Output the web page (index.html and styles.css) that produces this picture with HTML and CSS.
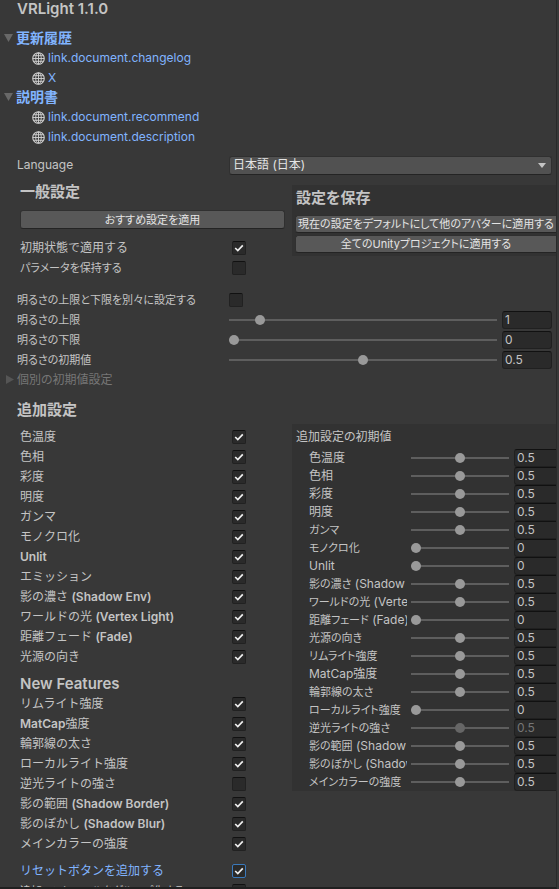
FILE: index.html
```
<!DOCTYPE html>
<html lang="ja">

<head>
  <meta charset="UTF-8" />
  <meta name="viewport" content="width=device-width, initial-scale=1.0" />
  <title>VRLight 1.1.0</title>
  <link rel="stylesheet" href="styles.css">
</head>

<body>
  <svg class="sprite" aria-hidden="true">
    <symbol id="globe" viewBox="0 0 14 14">
      <g fill="none" stroke="currentColor">
        <circle cx="7" cy="7" r="6.2" stroke-width="1.2" />
        <ellipse cx="7" cy="7" rx="3" ry="6" />
        <path d="M7 1v12M1 7h12M2 4h10M2 10h10" />
      </g>
    </symbol>
  </svg>

  <main class="inspector">
    <h1>VRLight 1.1.0</h1>

    <details class="links" open>
      <summary>更新履歴</summary>
      <a href="#changelog"><svg class="globe"><use href="#globe" /></svg>link.document.changelog</a>
      <a href="#x"><svg class="globe"><use href="#globe" /></svg>X</a>
    </details>
    <details class="links" open>
      <summary>説明書</summary>
      <a href="#recommend"><svg class="globe"><use href="#globe" /></svg>link.document.recommend</a>
      <a href="#description"><svg class="globe"><use href="#globe" /></svg>link.document.description</a>
    </details>

    <div class="field language">
      <label for="language">Language</label>
      <select id="language">
        <option>日本語 (日本)</option>
      </select>
    </div>

    <div class="columns general">
      <section class="column">
        <h2>一般設定</h2>
        <button class="apply">おすすめ設定を適用</button>
        <div class="toggles">
          <label class="toggle wide">初期状態で適用する<input type="checkbox" checked></label>
          <label class="toggle kana">パラメータを保持する<input type="checkbox"></label>
        </div>
      </section>
      <section class="panel save">
        <h2>設定を保存</h2>
        <button>現在の設定をデフォルトにして他のアバターに適用する</button>
        <button>全てのUnityプロジェクトに適用する</button>
      </section>
    </div>

    <section class="brightness">
      <div class="field">
        <label class="kana" for="separate">明るさの上限と下限を別々に設定する</label>
        <input type="checkbox" id="separate">
      </div>
      <div class="field">
        <label class="kana" for="upper">明るさの上限</label>
        <input type="range" id="upper" min="0" max="10" step="any" value="1">
        <input type="text" aria-label="明るさの上限" value="1">
      </div>
      <div class="field">
        <label class="kana" for="lower">明るさの下限</label>
        <input type="range" id="lower" min="0" max="1" step="any" value="0">
        <input type="text" aria-label="明るさの下限" value="0">
      </div>
      <div class="field">
        <label class="kana" for="initial">明るさの初期値</label>
        <input type="range" id="initial" min="0" max="1" step="any" value="0.5">
        <input type="text" aria-label="明るさの初期値" value="0.5">
      </div>
      <details class="individual">
        <summary>個別の初期値設定</summary>
      </details>
    </section>

    <h2 class="extra-title">追加設定</h2>
    <div class="columns">
      <section class="column">
        <div class="toggles wide">
          <label class="toggle">色温度<input type="checkbox" checked></label>
          <label class="toggle">色相<input type="checkbox" checked></label>
          <label class="toggle">彩度<input type="checkbox" checked></label>
          <label class="toggle">明度<input type="checkbox" checked></label>
          <label class="toggle">ガンマ<input type="checkbox" checked></label>
          <label class="toggle">モノクロ化<input type="checkbox" checked></label>
          <label class="toggle"><b>Unlit</b><input type="checkbox" checked></label>
          <label class="toggle">エミッション<input type="checkbox" checked></label>
          <label class="toggle"><span>影の濃さ <b>(Shadow Env)</b></span><input type="checkbox" checked></label>
          <label class="toggle"><span>ワールドの光 <b>(Vertex Light)</b></span><input type="checkbox" checked></label>
          <label class="toggle"><span>距離フェード <b>(Fade)</b></span><input type="checkbox" checked></label>
          <label class="toggle">光源の向き<input type="checkbox" checked></label>
        </div>
        <h2 class="new-title">New Features</h2>
        <div class="toggles wide">
          <label class="toggle">リムライト強度<input type="checkbox" checked></label>
          <label class="toggle"><span><b>MatCap</b>強度</span><input type="checkbox" checked></label>
          <label class="toggle">輪郭線の太さ<input type="checkbox" checked></label>
          <label class="toggle">ローカルライト強度<input type="checkbox" checked></label>
          <label class="toggle">逆光ライトの強さ<input type="checkbox"></label>
          <label class="toggle"><span>影の範囲 <b>(Shadow Border)</b></span><input type="checkbox" checked></label>
          <label class="toggle"><span>影のぼかし <b>(Shadow Blur)</b></span><input type="checkbox" checked></label>
          <label class="toggle">メインカラーの強度<input type="checkbox" checked></label>
        </div>
        <div class="toggles options">
          <label class="toggle wide selected">リセットボタンを追加する<input type="checkbox" checked></label>
          <label class="toggle kana">追加コントロールをグループ化する<input type="checkbox" checked></label>
        </div>
      </section>

      <section class="panel defaults">
        <h3>追加設定の初期値</h3>
        <div id="defaultList"></div>
      </section>
    </div>
  </main>

  <script>
    const defaultList = document.getElementById("defaultList");

    const defaults = [
      { label: "色温度", value: 0.5 },
      { label: "色相", value: 0.5 },
      { label: "彩度", value: 0.5 },
      { label: "明度", value: 0.5 },
      { label: "ガンマ", value: 0.5 },
      { label: "モノクロ化", value: 0 },
      { label: "Unlit", value: 0 },
      { label: "影の濃さ", suffix: " (Shadow Env)", value: 0.5 },
      { label: "ワールドの光", suffix: " (Vertex Light)", value: 0.5 },
      { label: "距離フェード", suffix: " (Fade)", value: 0 },
      { label: "光源の向き", value: 0.5 },
      { label: "リムライト強度", value: 0.5 },
      { label: "MatCap強度", value: 0.5 },
      { label: "輪郭線の太さ", value: 0.5 },
      { label: "ローカルライト強度", value: 0 },
      { label: "逆光ライトの強さ", value: 0.5, disabled: true },
      { label: "影の範囲", suffix: " (Shadow Border)", value: 0.5 },
      { label: "影のぼかし", suffix: " (Shadow Blur)", value: 0.5 },
      { label: "メインカラーの強度", value: 0.5 }
    ];

    const hasKana = (text) => /[ぁ-ヿ]/.test(text);

    defaults.forEach((item, i) => {
      const row = document.createElement("div");
      row.className = "default-row";
      row.innerHTML = `
        <label for="default${i}"><span class="${hasKana(item.label) ? "kana" : ""}">${item.label}</span>${item.suffix || ""}</label>
        <input type="range" id="default${i}" min="0" max="1" step="any" value="${item.value}">
        <input type="text" aria-label="${item.label}" value="${item.value}">`;
      const [range, text] = row.querySelectorAll("input");
      range.disabled = text.disabled = Boolean(item.disabled);
      range.addEventListener("input", () => {
        text.value = Number(range.value).toFixed(2);
      });
      defaultList.appendChild(row);
    });
  </script>
</body>

</html>
```
FILE: styles.css
```
:root {
  --background: #383838;
  --panel: #323232;
  --field: #2a2a2a;
  --field-border: #202020;
  --button: #585858;
  --text: #c4c4c4;
  --text-disabled: #767676;
  --link: #81b4ff;
  --label-width: 212px;
}

* {
  box-sizing: border-box;
}

body {
  margin: 0;
  height: 100vh;
  overflow: hidden;
  background: var(--background);
  color: var(--text);
  font-family: Inter, "Noto Sans CJK JP", sans-serif;
  font-size: 12px;
  line-height: 20px;
  font-feature-settings: "palt";
}

.sprite {
  display: none;
}

.inspector {
  height: 100vh;
  margin-right: 2px;
  overflow: hidden;
  border-right: 1px solid #2a2a2a;
  border-bottom: 2px solid #202020;
}

h1,
h2,
h3 {
  margin: 0;
  white-space: nowrap;
}

h1 {
  padding-left: 17px;
  font-size: 15px;
  font-weight: 600;
  line-height: 18px;
}

h2 {
  font-size: 15px;
  font-weight: 600;
  font-feature-settings: normal;
}

h3 {
  font-size: 12px;
  font-weight: 400;
}

b {
  font-weight: 600;
}

.kana {
  font-size: 11px;
}

.wide {
  font-feature-settings: normal;
}

/* Foldouts */
summary {
  display: flex;
  align-items: center;
  height: 20px;
  list-style: none;
  cursor: pointer;
}

summary::before {
  content: "";
  width: 9px;
  height: 8px;
  margin: 0 3px 0 4px;
  background: #686868;
  clip-path: polygon(0 0, 100% 0, 50% 100%);
}

.links {
  margin-top: -1px;
}

h1 + .links {
  margin-top: 10px;
}

.links summary {
  color: var(--link);
  font-size: 14px;
  font-weight: 700;
}

.links a {
  display: flex;
  align-items: center;
  gap: 3px;
  height: 20px;
  padding-left: 32px;
  color: var(--link);
  text-decoration: none;
}

.globe {
  width: 13px;
  height: 13px;
  color: #d0d0d0;
}

/* Controls */
select,
button,
input {
  margin: 0;
  color: inherit;
  font: inherit;
  font-feature-settings: inherit;
}

select,
button {
  height: 19px;
  border: 1px solid #303030;
  border-bottom-color: #242424;
  border-radius: 3px;
  background: var(--button);
  color: #e4e4e4;
  line-height: 16px;
}

button {
  overflow: hidden;
  padding: 0;
  font-size: 11px;
  white-space: nowrap;
}

select {
  flex: 1;
  min-width: 0;
  padding: 0 3px;
  appearance: none;
  background: #515151 url("data:image/svg+xml,%3Csvg xmlns='http://www.w3.org/2000/svg' width='8' height='5'%3E%3Cpath d='M0 0h8L4 5z' fill='%23c4c4c4'/%3E%3C/svg%3E") no-repeat right 5px center;
}

input[type="checkbox"] {
  flex: none;
  width: 14px;
  height: 14px;
  appearance: none;
  border: 1px solid #212121;
  border-top-color: #111;
  border-radius: 2px;
  background: var(--field);
}

input[type="checkbox"]:checked {
  background: var(--field) url("data:image/svg+xml,%3Csvg xmlns='http://www.w3.org/2000/svg' width='12' height='12'%3E%3Cpath d='M2.2 6l2.6 2.5L9.8 3.3' fill='none' stroke='%23eee' stroke-width='1.7'/%3E%3C/svg%3E") no-repeat center;
}

input[type="range"] {
  flex: 1;
  min-width: 0;
  height: 10px;
  appearance: none;
  background: linear-gradient(#5e5e5e, #5e5e5e) no-repeat center / 100% 2px;
}

input[type="range"]::-webkit-slider-thumb {
  width: 10px;
  height: 10px;
  appearance: none;
  border-radius: 50%;
  background: #999;
}

input[type="range"]:disabled::-webkit-slider-thumb {
  background: #666;
}

input[type="text"] {
  flex: none;
  width: 50px;
  height: 18px;
  padding: 1px 2px 0;
  border: 1px solid var(--field-border);
  border-top-color: #111;
  border-radius: 3px;
  background: var(--field);
}

input[type="text"]:disabled {
  color: var(--text-disabled);
}

.field {
  display: flex;
  align-items: center;
  height: 20px;
  padding: 0 4px 0 17px;
}

.field label {
  flex: none;
  width: var(--label-width);
  white-space: nowrap;
}

.field input[type="text"] {
  margin-left: 5px;
}

.language {
  margin-top: 8px;
}

/* Two column areas */
.columns {
  display: grid;
  grid-template-columns: 265fr 264fr;
  column-gap: 7px;
  align-items: start;
  padding-left: 20px;
}

.general {
  margin-top: 7px;
}

.apply {
  width: 100%;
  margin-top: 8px;
}

.general .toggles {
  margin-top: 8px;
}

.toggle {
  display: flex;
  align-items: center;
  height: 20px;
  padding-right: 39px;
  justify-content: space-between;
  white-space: nowrap;
}

.panel {
  min-width: 0;
  overflow: hidden;
  background: var(--panel);
}

.save {
  display: grid;
  gap: 2px;
  margin-top: 3px;
  padding: 3px 0 3px 3px;
}

.save h2 {
  padding: 0 0 5px 1px;
  font-feature-settings: "palt";
}

.save button {
  height: 18px;
  border-right: 0;
  border-radius: 3px 0 0 3px;
}

.brightness {
  margin-top: 12px;
}

.individual {
  color: var(--text-disabled);
}

.individual summary::before {
  width: 8px;
  height: 9px;
  margin: 0 3px 0 6px;
  background: #555;
  clip-path: polygon(0 0, 100% 50%, 0 100%);
}

.extra-title {
  margin-top: 10px;
  padding-left: 17px;
}

.column > .toggles:first-child {
  margin-top: 7px;
}

.new-title,
.options {
  margin-top: 7px;
}

.selected {
  color: var(--link);
}

.selected input[type="checkbox"] {
  border-color: #3a79bb;
}

/* Default values */
.defaults {
  margin-top: 4px;
  padding: 3px 0 0 4px;
}

.defaults h3 {
  margin-bottom: 2px;
}

.default-row {
  display: flex;
  align-items: center;
  height: 18px;
  padding-left: 13px;
}

.default-row label {
  flex: none;
  width: 98px;
  height: 18px;
  margin-right: 4px;
  overflow: hidden;
  line-height: 18px;
  white-space: nowrap;
}

.default-row input[type="text"] {
  width: 42px;
  margin-left: 5px;
  border-right: 0;
  border-radius: 3px 0 0 3px;
}
```
